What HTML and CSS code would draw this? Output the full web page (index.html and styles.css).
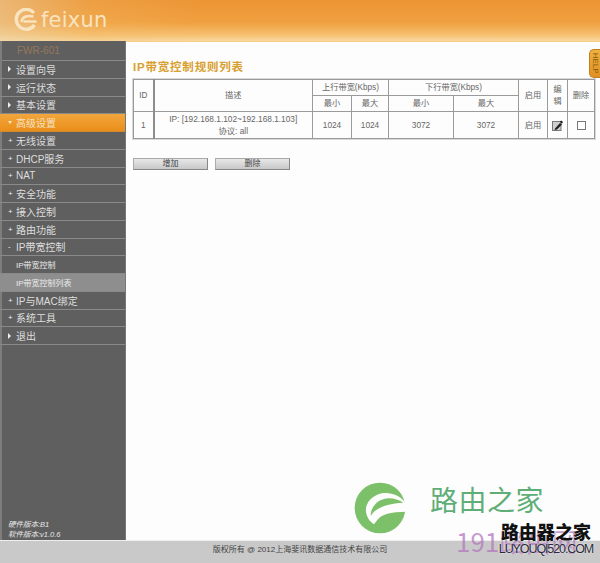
FILE: index.html
```html
<!DOCTYPE html>
<html lang="zh-CN">
<head>
<meta charset="utf-8">
<title>IP带宽控制规则列表</title>
<link rel="stylesheet" href="styles.css">
</head>
<body>
<header class="top">
  <svg class="logo-mark" viewBox="0 0 24 24" width="24" height="24" aria-hidden="true">
    <path d="M20 5A10 10 0 1 0 20.500 17" fill="none" stroke="#f8e4c0" stroke-width="3.400"/>
    <path d="M7.500 14C8 9 13 7 19.500 8.500" fill="none" stroke="#f8e4c0" stroke-width="2.600"/>
    <path d="M9.500 13.500H22.500" fill="none" stroke="#f8e4c0" stroke-width="2.400"/>
  </svg>
  <span class="logo-word">feixun</span>
</header>
<div class="middle">
  <aside class="side">
    <div class="model">FWR-601</div>
    <nav class="menu">
      <a class="item"><i class="mk tri"></i>设置向导</a>
      <a class="item"><i class="mk tri"></i>运行状态</a>
      <a class="item"><i class="mk tri"></i>基本设置</a>
      <a class="item on"><i class="mk down"></i>高级设置</a>
      <a class="item"><i class="mk">+</i>无线设置</a>
      <a class="item"><i class="mk">+</i>DHCP服务</a>
      <a class="item"><i class="mk">+</i>NAT</a>
      <a class="item"><i class="mk">+</i>安全功能</a>
      <a class="item"><i class="mk">+</i>接入控制</a>
      <a class="item"><i class="mk">+</i>路由功能</a>
      <a class="item"><i class="mk">-</i>IP带宽控制</a>
      <a class="item sub">IP带宽控制</a>
      <a class="item sub cur">IP带宽控制列表</a>
      <a class="item"><i class="mk">+</i>IP与MAC绑定</a>
      <a class="item"><i class="mk">+</i>系统工具</a>
      <a class="item"><i class="mk tri"></i>退出</a>
    </nav>
    <div class="ver">
      <div>硬件版本:B1</div>
      <div>软件版本:v1.0.6</div>
    </div>
  </aside>
  <main class="content">
    <h1 class="title">IP带宽控制规则列表</h1>
    <table class="rules">
      <colgroup>
        <col class="c-id"><col class="c-desc"><col class="c-a"><col class="c-b"><col class="c-c"><col class="c-d"><col class="c-en"><col class="c-ed"><col class="c-del">
      </colgroup>
      <tr class="r1">
        <th rowspan="2" class="strong">ID</th>
        <th rowspan="2">描述</th>
        <th colspan="2">上行带宽(Kbps)</th>
        <th colspan="2">下行带宽(Kbps)</th>
        <th rowspan="2">启用</th>
        <th rowspan="2">编<br>辑</th>
        <th rowspan="2">删除</th>
      </tr>
      <tr class="r2">
        <th>最小</th><th>最大</th><th>最小</th><th>最大</th>
      </tr>
      <tr class="r3">
        <td class="strong">1</td>
        <td>IP: [192.168.1.102~192.168.1.103]<br>协议: all</td>
        <td>1024</td><td>1024</td><td>3072</td><td>3072</td>
        <td>启用</td>
        <td>
          <svg class="edit" viewBox="0 0 11 11" width="11" height="11" aria-hidden="true">
            <rect x="0.500" y="1.500" width="8.500" height="9" fill="#cfcfcf" stroke="#777"/>
            <path d="M3 8.500 8 3l2 1.500-5 5-2.500.5z" fill="#222"/>
            <path d="M8 2l1-1.500 2 1.500-1 1.500z" fill="#111"/>
          </svg>
        </td>
        <td><span class="check"></span></td>
      </tr>
    </table>
    <div class="btns">
      <button class="btn">增加</button>
      <button class="btn">删除</button>
    </div>
    <a class="help">HELP</a>
  </main>
</div>
<footer class="foot">版权所有 @ 2012上海斐讯数据通信技术有限公司</footer>
<svg class="wm-mark" viewBox="0 0 195 180" width="65" height="60" aria-hidden="true">
  <circle cx="90" cy="84" r="76" fill="#7cc16a"/>
  <path d="M168 70C150 45 120 35 95 40 65 47 45 70 48 95 50 112 60 125 72 133L82 120C95 102 120 96 170 95z" fill="#fdfdfd"/>
  <path d="M160 68C135 50 100 50 80 68 68 80 62 92 62 108 75 85 110 70 160 68z" fill="#7cc16a"/>
</svg>
<div class="wm-name">路由之家</div>
<div class="wm-num">191路由网</div>
<div class="wm-black">
  <div class="wm-b1">路由器之家</div>
  <div class="wm-b2">LUYOUQI520.COM</div>
</div>
</body>
</html>
```
FILE: styles.css
```css
* { box-sizing: border-box; }
html, body { margin: 0; padding: 0; }
body {
  width: 600px;
  height: 563px;
  position: relative;
  overflow: hidden;
  display: flex;
  flex-direction: column;
  background: #fdfdfd;
  font-family: "Liberation Sans", "Noto Sans CJK SC", sans-serif;
  color: #555;
}
.top {
  height: 41px;
  flex: none;
  display: flex;
  align-items: center;
  gap: 3px;
  padding: 0 0 1px 14px;
  background: linear-gradient(90deg, rgba(235,215,180,.5) 0, rgba(240,190,110,.25) 90px, rgba(240,150,40,0) 200px), linear-gradient(180deg, #ec9434 0, #f0a040 55%, #f6c070 85%, #f8d8a0 100%);
}
.logo-mark { flex: none; }
.logo-word {
  font-family: "DejaVu Sans", sans-serif;
  font-size: 21px;
  line-height: 24px;
  letter-spacing: 0.200px;
  color: #f8e4c0;
  font-weight: 400;
}
.middle { flex: 1; display: flex; min-height: 0; }
.side {
  width: 126px;
  flex: none;
  display: flex;
  flex-direction: column;
  background: #5f5f5f;
  border-left: 2px solid #7d7d7d;
  border-right: 1px solid #777;
}
.model {
  height: 19px;
  padding: 3px 0 0 15px;
  font-size: 10px;
  line-height: 13px;
  color: #96785a;
}
.menu { display: flex; flex-direction: column; border-top: 1px solid #8a8a8a; }
.item {
  height: 17.750px;
  display: flex;
  align-items: center;
  margin-left: -2px;
  padding-left: 8px;
  font-size: 10px;
  color: #dedede;
  border-bottom: 1px solid #8a8a8a;
  white-space: nowrap;
}
.mk {
  width: 8px;
  flex: none;
  font-style: normal;
  font-size: 8px;
  color: #eee;
  display: flex;
  align-items: center;
}
.mk.tri::before {
  content: "";
  border-left: 3px solid #eee;
  border-top: 3px solid transparent;
  border-bottom: 3px solid transparent;
}
.mk.down::before {
  content: "";
  border-top: 3px solid #f8e8c8;
  border-left: 2.500px solid transparent;
  border-right: 2.500px solid transparent;
}
.item.on {
  background: linear-gradient(180deg, #f2a63c, #ea8e1a);
  color: #f4e4c4;
  border-bottom-color: #d08a30;
}
.item.sub { padding-left: 16px; font-size: 8px; color: #eaeaea; }
.item.cur { background: #8e8e8e; }
.ver {
  margin-top: auto;
  padding: 0 0 0 6px;
  font-size: 7.500px;
  line-height: 10px;
  font-style: italic;
  color: #e8e8e8;
}
.content { flex: 1; position: relative; padding: 19px 6px 0 7px; border-top: 1px solid #f5cf8a; min-width: 0; }
.title {
  margin: 0 0 5px;
  height: 13px;
  font-size: 11.500px;
  line-height: 13px;
  font-weight: 700;
  letter-spacing: 0.800px;
  color: #d8a030;
}
.rules {
  width: 461px;
  table-layout: fixed;
  border-collapse: collapse;
  border: 1px solid #9a9a9a;
  outline: 1px solid #d8d8d8;
  background: #fdfdfd;
}
.c-id { width: 20px; }
.c-desc { width: 159px; }
.c-a { width: 39px; }
.c-b { width: 37px; }
.c-c { width: 65px; }
.c-d { width: 65px; }
.c-en { width: 29px; }
.c-ed { width: 20px; }
.c-del { width: 27px; }
.rules th, .rules td {
  border: 1px solid #9a9a9a;
  padding: 0;
  text-align: center;
  vertical-align: middle;
  font-size: 8.200px;
  line-height: 12px;
  font-weight: 400;
  color: #666;
}
.rules .strong { border-right: 2px solid #8c8c8c; }
.rules td { font-size: 8.300px; }
.r1 { height: 16px; }
.r2 { height: 16px; }
.r3 { height: 27px; }
.edit { display: block; margin: 0 auto; }
.check { display: block; width: 9px; height: 9px; margin: 0 auto; border: 1px solid #777; background: #fff; }
.btns { display: flex; gap: 7px; margin-top: 19px; }
.btn {
  width: 75px;
  height: 12px;
  padding: 0;
  font: 8px/10px "Liberation Sans", "Noto Sans CJK SC", sans-serif;
  color: #444;
  border: 1px solid #888;
  border-top-color: #aaa;
  border-left-color: #aaa;
  background: linear-gradient(180deg, #e8e8e8, #c8c8c8);
}
.help {
  position: absolute;
  right: 0;
  top: 7px;
  width: 11px;
  height: 29px;
  background: linear-gradient(180deg, #f0b040, #e09020);
  border: 1px solid #c08020;
  border-right: 0;
  border-radius: 5px 0 0 5px;
  writing-mode: vertical-rl;
  text-align: center;
  font-size: 7.500px;
  line-height: 10px;
  letter-spacing: 0.300px;
  color: #7a5a10;
}
.foot {
  height: 23px;
  flex: none;
  border-top: 1px solid #eee;
  background: #c9c9c9;
  padding-top: 2px;
  text-align: center;
  font-size: 8px;
  line-height: 14px;
  color: #444;
}
.wm-mark { position: absolute; left: 350px; top: 480px; }
.wm-name {
  position: absolute;
  left: 430px;
  top: 483px;
  font-family: "Noto Sans CJK SC", sans-serif;
  font-size: 28px;
  line-height: 32px;
  letter-spacing: 0.500px;
  white-space: nowrap;
  color: #5fae78;
}
.wm-num {
  position: absolute;
  left: 456px;
  top: 522px;
  font-family: "Noto Sans CJK SC", sans-serif;
  font-size: 26px;
  line-height: 38px;
  white-space: nowrap;
  color: rgba(180, 120, 190, .75);
}
.wm-black { position: absolute; left: 498px; top: 522px; width: 96px; text-align: center; }
.wm-b1 {
  font-family: "Noto Sans CJK SC", sans-serif;
  font-size: 18px;
  line-height: 18px;
  font-weight: 900;
  color: #111;
  white-space: nowrap;
  text-shadow: 1px 0 0 #fff;
}
.wm-b2 {
  margin-top: 3px;
  font-size: 12.500px;
  line-height: 13px;
  letter-spacing: -1.100px;
  color: #2a2a3a;
  white-space: nowrap;
  text-shadow: 0 0 2px #fff;
}
```
